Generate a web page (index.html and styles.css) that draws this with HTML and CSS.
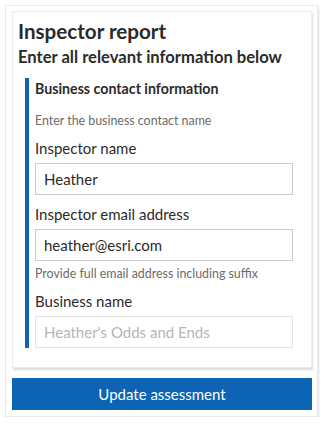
FILE: index.html
```html
<!DOCTYPE html>
<html>
<head>
<meta charset="utf-8">
<link rel="stylesheet" href="styles.css">
</head>
<body>
<div class="panel">
  <div class="card">
    <h1 class="title">Inspector report</h1>
    <h2 class="subtitle">Enter all relevant information below</h2>
    <div class="group">
      <div class="group-title">Business contact information</div>
      <div class="group-desc">Enter the business contact name</div>
      <div class="field">
        <label class="label">Inspector name</label>
        <div class="input">Heather</div>
      </div>
      <div class="field">
        <label class="label">Inspector email address</label>
        <div class="input">heather@esri.com</div>
        <div class="hint">Provide full email address including suffix</div>
      </div>
      <div class="field">
        <label class="label">Business name</label>
        <div class="input disabled">Heather's Odds and Ends</div>
      </div>
    </div>
  </div>
  <button class="btn">Update assessment</button>
</div>
</body>
</html>
```
FILE: styles.css
```css
* { box-sizing: border-box; }
body {
  margin: 0;
  background: #fff;
  font-family: "Lato", "Noto Sans", sans-serif;
  color: #2b2b2b;
}
.panel {
  margin: 5px 6px 0 5px;
  width: 313px;
  height: 412px;
  border: 1px solid #eaeaea;
  box-shadow: 1px 2px 2px rgba(0,0,0,0.12);
  padding: 5px 5px 6px 6px;
  display: flex;
  flex-direction: column;
}
.card {
  height: 358px;
  border: 1px solid #ececec;
  box-shadow: 1px 2px 2px rgba(0,0,0,0.14);
  padding: 6px 18px 0 5px;
}
.title {
  margin: 0;
  font-size: 20.6px;
  line-height: 26px;
  font-weight: 700;
  color: #2b2b2b;
}
.subtitle {
  margin: 2px 0 0;
  font-size: 16.6px;
  line-height: 22px;
  font-weight: 700;
  color: #2b2b2b;
}
.group {
  margin: 10px 0 0 7px;
  border-left: 4px solid #0d64b4;
  padding-left: 6px;
  height: 270px;
}
.group-title {
  font-size: 14.2px;
  line-height: 18px;
  font-weight: 700;
  color: #2b2b2b;
  padding-top: 2px;
}
.group-desc {
  margin-top: 15px;
  font-size: 12.4px;
  line-height: 16px;
  color: #6b6b6b;
}
.field { margin-top: 9px; }
.label {
  display: block;
  font-size: 15px;
  line-height: 20px;
  color: #2b2b2b;
}
.input {
  margin-top: 5px;
  height: 32px;
  border: 1px solid #cacaca;
  padding: 0 8px;
  font-size: 15px;
  line-height: 30px;
  color: #2b2b2b;
}
.input.disabled {
  border-color: #e4e4e4;
  color: #b5b5b5;
}
.hint {
  margin-top: 5px;
  margin-bottom: 6px;
  font-size: 12.4px;
  line-height: 16px;
  color: #6b6b6b;
}
.btn {
  margin-top: 10px;
  height: 32px;
  border: none;
  background: #0d64b4;
  color: #fff;
  font-family: inherit;
  font-size: 15px;
  padding: 0;
  width: 300px;
}
```
